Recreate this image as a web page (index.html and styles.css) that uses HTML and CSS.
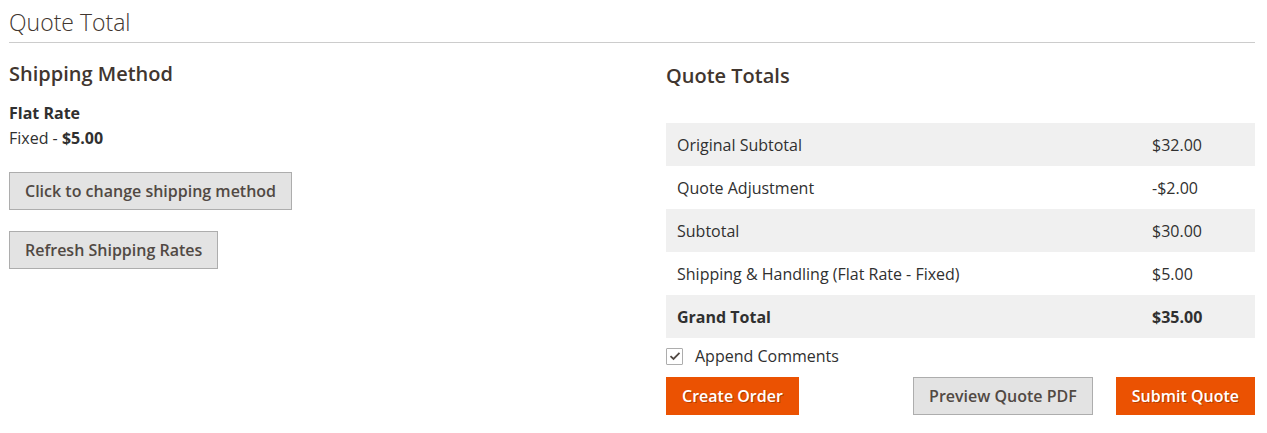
FILE: index.html
```html
<!DOCTYPE html>
<html lang="en">
<head>
<meta charset="utf-8">
<title>Quote Total</title>
<link rel="stylesheet" href="styles.css">
</head>
<body>
<div class="page">
  <h1 class="page-title">Quote Total</h1>
  <div class="sections">
    <section class="shipping">
      <h2 class="section-title">Shipping Method</h2>
      <div class="method">
        <div class="method-name">Flat Rate</div>
        <div class="method-price">Fixed - <strong>$5.00</strong></div>
      </div>
      <div class="left-actions">
        <button class="btn">Click to change shipping method</button>
        <button class="btn">Refresh Shipping Rates</button>
      </div>
    </section>
    <section class="totals">
      <h2 class="section-title totals-title">Quote Totals</h2>
      <div class="totals-table">
        <div class="row odd"><span class="label">Original Subtotal</span><span class="value">$32.00</span></div>
        <div class="row"><span class="label">Quote Adjustment</span><span class="value">-$2.00</span></div>
        <div class="row odd"><span class="label">Subtotal</span><span class="value">$30.00</span></div>
        <div class="row"><span class="label">Shipping &amp; Handling (Flat Rate - Fixed)</span><span class="value">$5.00</span></div>
        <div class="row odd grand"><span class="label">Grand Total</span><span class="value">$35.00</span></div>
      </div>
      <label class="append">
        <span class="checkbox">
          <svg width="12" height="10" viewBox="0 0 12 10"><path d="M1.5 5.2 L4.5 8 L10.5 1.8" fill="none" stroke="#514943" stroke-width="1.8"/></svg>
        </span>
        <span>Append Comments</span>
      </label>
      <div class="actions">
        <button class="btn btn-primary">Create Order</button>
        <div class="actions-right">
          <button class="btn">Preview Quote PDF</button>
          <button class="btn btn-primary">Submit Quote</button>
        </div>
      </div>
    </section>
  </div>
</div>
</body>
</html>
```

FILE: styles.css
```css
* { box-sizing: border-box; }
html, body { margin: 0; padding: 0; background: #fff; }
body {
  font-family: "Open Sans", "Liberation Sans", sans-serif;
  color: #303030;
  font-size: 16px;
}
.page {
  padding: 0 12px 0 9px;
}
.page-title {
  margin: 0;
  padding: 6px 0 3px;
  font-size: 23px;
  font-weight: 300;
  line-height: 33px;
  color: #41362f;
  border-bottom: 1px solid #cccccc;
}
.sections {
  display: grid;
  grid-template-columns: 1fr 1fr;
}
.section-title {
  margin: 0;
  font-size: 20px;
  font-weight: 600;
  line-height: 27px;
  color: #41362f;
}
.shipping .section-title {
  margin-top: 17px;
}
.totals {
  padding-left: 34px;
}
.totals-title {
  margin-top: 19px;
}
.method {
  margin-top: 14px;
  line-height: 25px;
}
.method-name {
  font-weight: 700;
}
.left-actions {
  margin-top: 21px;
  display: flex;
  flex-direction: column;
  align-items: flex-start;
  gap: 21px;
}
.btn {
  font-family: inherit;
  font-size: 16px;
  font-weight: 600;
  line-height: 22px;
  padding: 7px 15px;
  background: #e3e3e3;
  border: 1px solid #adadad;
  color: #514943;
  border-radius: 0;
  cursor: pointer;
}
.btn-primary {
  background: #eb5202;
  border-color: #eb5202;
  color: #ffffff;
  text-shadow: 1px 1px 0 rgba(0,0,0,0.25);
}
.totals-table {
  margin-top: 34px;
}
.row {
  display: grid;
  grid-template-columns: 1fr 92px;
  height: 43px;
  align-items: center;
  padding: 0 11px;
  font-size: 16px;
}
.row.odd { background: #f0f0f0; }
.row.grand { font-weight: 700; }
.append {
  display: flex;
  align-items: center;
  gap: 12px;
  margin-top: 9px;
  height: 18px;
  font-size: 16px;
}
.checkbox {
  width: 17px;
  height: 17px;
  border: 1px solid #adadad;
  border-radius: 1px;
  background: #fff;
  display: flex;
  align-items: center;
  justify-content: center;
}
.actions {
  margin-top: 12px;
  display: flex;
  justify-content: space-between;
}
.actions-right {
  display: flex;
  gap: 23px;
}
```
